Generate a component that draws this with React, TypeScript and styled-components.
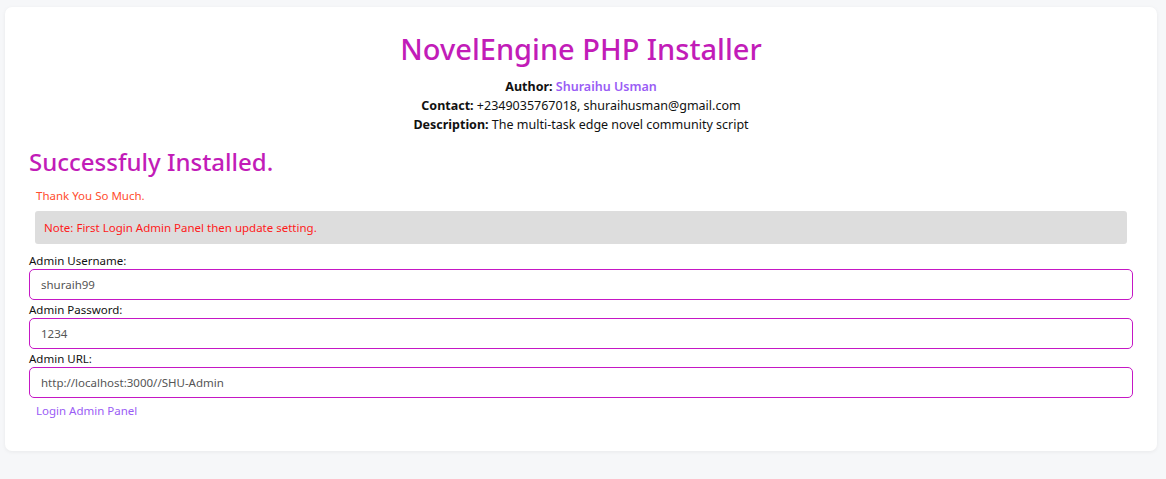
import React from "react";
import styled, { createGlobalStyle } from "styled-components";

const Global = createGlobalStyle`
  html, body { margin: 0; padding: 0; background: #f6f7f9; }
  body { font-family: "Noto Sans", "Open Sans", sans-serif; color: #111; }
  * { box-sizing: border-box; }
`;

const Page = styled.div`
  padding: 7px 9px 29px 5px;
`;

const Card = styled.main`
  background: #fff;
  border-radius: 7px;
  box-shadow: 0 1px 4px rgba(0, 0, 0, 0.06);
  padding: 22px 24px 31px 24px;
`;

const Header = styled.header`
  text-align: center;
`;

const Title = styled.h1`
  margin: 0 0 8px;
  font-size: 29px;
  line-height: 40px;
  font-weight: 500;
  color: #c21cb8;
`;

const Meta = styled.p`
  margin: 0;
  font-size: 12.5px;
  line-height: 19px;
  color: #111;
`;

const Key = styled.b`
  font-weight: 700;
`;

const Author = styled.span`
  color: #9a5cf5;
  font-weight: 600;
`;

const Success = styled.h2`
  margin: 12px 0 0;
  font-size: 24px;
  line-height: 32px;
  font-weight: 500;
  color: #c21cb8;
`;

const Thanks = styled.p`
  margin: 10px 0 0 7px;
  font-size: 11.5px;
  line-height: 16px;
  color: #ff4d2e;
`;

const Note = styled.div`
  margin: 7px 6px 0 6px;
  background: #dddddd;
  border-radius: 3px;
  padding: 8px 9px;
  font-size: 11.5px;
  line-height: 17px;
  color: #ff1a1a;
`;

const Form = styled.form`
  margin-top: 8px;
  display: flex;
  flex-direction: column;
`;

const Label = styled.label<{ $first?: boolean }>`
  display: block;
  font-size: 11.5px;
  line-height: 17px;
  color: #111;
  margin-top: ${(p) => (p.$first ? "0" : "1px")};
`;

const Input = styled.input`
  display: block;
  width: 100%;
  height: 31px;
  border: 1px solid #c517c5;
  border-radius: 5px;
  padding: 0 11px;
  font-family: inherit;
  font-size: 11.5px;
  color: #555;
  background: #fff;
  outline: none;
`;

const LoginLink = styled.a`
  display: inline-block;
  margin: 5px 0 0 7px;
  font-size: 11.5px;
  line-height: 16px;
  color: #9a5cf5;
  text-decoration: none;
`;

export default function App() {
  return (
    <>
      <Global />
      <Page>
        <Card>
          <Header>
            <Title>NovelEngine PHP Installer</Title>
            <Meta>
              <Key>Author:</Key> <Author>Shuraihu Usman</Author>
            </Meta>
            <Meta>
              <Key>Contact:</Key> +2349035767018, shuraihusman@gmail.com
            </Meta>
            <Meta>
              <Key>Description:</Key> The multi-task edge novel community script
            </Meta>
          </Header>
          <Success>Successfuly Installed.</Success>
          <Thanks>Thank You So Much.</Thanks>
          <Note>Note: First Login Admin Panel then update setting.</Note>
          <Form onSubmit={(e) => e.preventDefault()}>
            <Label $first>Admin Username:</Label>
            <Input readOnly defaultValue="shuraih99" />
            <Label>Admin Password:</Label>
            <Input readOnly defaultValue="1234" />
            <Label>Admin URL:</Label>
            <Input readOnly defaultValue="http://localhost:3000//SHU-Admin" />
          </Form>
          <LoginLink href="#">Login Admin Panel</LoginLink>
        </Card>
      </Page>
    </>
  );
}
